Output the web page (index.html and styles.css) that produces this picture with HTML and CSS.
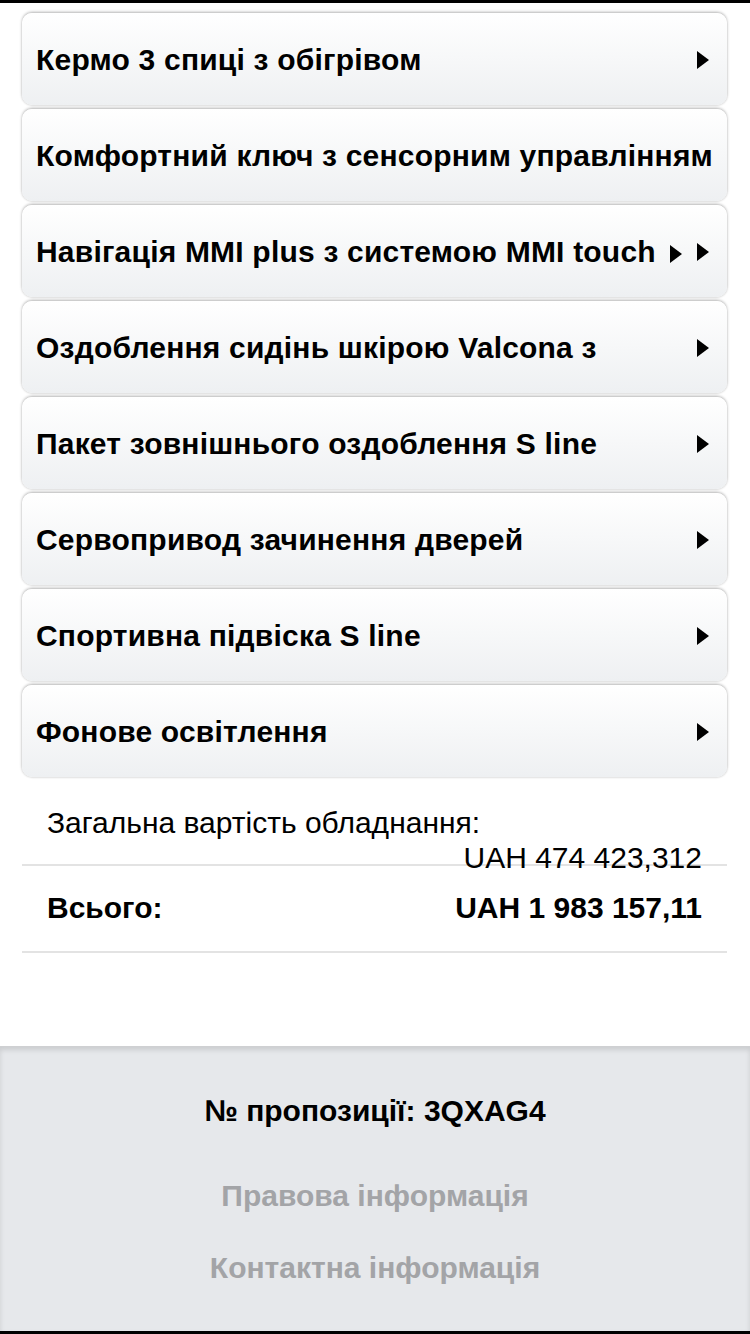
FILE: index.html
```html
<!DOCTYPE html>
<html lang="uk">
<head>
<meta charset="UTF-8" />
<meta name="viewport" content="width=device-width, initial-scale=1" />
<title>Обладнання</title>
<link rel="stylesheet" href="styles.css">
</head>
<body>

<div class="topbar"></div>

<div class="options">
  <div class="option"><span class="title">Кермо 3 спиці з обігрівом</span><span class="arrow"></span></div>
  <div class="option"><span class="title">Комфортний ключ з сенсорним управлінням</span></div>
  <div class="option"><span class="title">Навігація MMI plus з системою MMI touch <span class="arrow inline"></span></span><span class="arrow"></span></div>
  <div class="option"><span class="title">Оздоблення сидінь шкірою Valcona з</span><span class="arrow"></span></div>
  <div class="option"><span class="title">Пакет зовнішнього оздоблення S line</span><span class="arrow"></span></div>
  <div class="option"><span class="title">Сервопривод зачинення дверей</span><span class="arrow"></span></div>
  <div class="option"><span class="title">Спортивна підвіска S line</span><span class="arrow"></span></div>
  <div class="option"><span class="title">Фонове освітлення</span><span class="arrow"></span></div>
</div>

<div class="summary">
  <div class="sum-label">Загальна вартість обладнання:</div>
  <div class="sum-value">UAH 474 423,312</div>
  <div class="total">
    <span>Всього:</span>
    <span>UAH 1 983 157,11</span>
  </div>
</div>

<footer>
  <div class="offer">№ пропозиції: 3QXAG4</div>
  <a href="#" class="legal">Правова інформація</a>
  <a href="#" class="contact">Контактна інформація</a>
</footer>

<div class="bottombar"></div>

</body>
</html>
```

FILE: styles.css
```css
body {
  margin: 0;
  padding: 0;
  background: #fff;
  color: #000;
  font-family: "Liberation Sans", Arial, sans-serif;
  font-size: 30px;
}
.topbar {
  height: 3px;
  background: #000;
}
.options {
  padding: 10px 23px 0 22px;
  display: flex;
  flex-direction: column;
  gap: 4px;
}
.option {
  height: 92px;
  border-radius: 10px;
  background: linear-gradient(#ffffff, #eef0f2);
  box-shadow: 0 -1px 3px rgba(0,0,0,0.3), 0 1px 2px rgba(0,0,0,0.08);
  display: flex;
  align-items: center;
  padding: 2px 18px 0 14px;
  box-sizing: border-box;
  overflow: hidden;
  white-space: nowrap;
}
.option .title {
  flex: 1;
  min-width: 0;
  font-weight: bold;
  line-height: 34px;
  letter-spacing: 0.2px;
}
.arrow {
  flex: none;
  width: 0;
  height: 0;
  border-top: 9px solid transparent;
  border-bottom: 9px solid transparent;
  border-left: 12px solid #000;
}
.arrow.inline {
  display: inline-block;
  vertical-align: -1px;
  margin-left: 6px;
}

/* Sumas */
.summary {
  margin: 29px 23px 0 22px;
}
.sum-label {
  padding: 0 25px;
  line-height: 34px;
  height: 35px;
}
.sum-value {
  padding: 0 25px;
  line-height: 34px;
  height: 23px;
  text-align: right;
  border-bottom: 2px solid #e3e3e3;
}
.total {
  display: flex;
  justify-content: space-between;
  padding: 25px 25px 26px;
  line-height: 34px;
  font-weight: bold;
  border-bottom: 2px solid #e3e3e3;
}

footer {
  margin-top: 93px;
  height: 285px;
  box-sizing: border-box;
  background: #e6e8eb;
  box-shadow: inset 0 3px 5px rgba(0,0,0,0.12);
  border-top: 1px solid #cfd0d2;
  padding-top: 47px;
  display: flex;
  flex-direction: column;
  align-items: center;
  line-height: 34px;
  font-weight: bold;
}
.offer {
  color: #000;
}
footer a {
  color: #a3a4a7;
  text-decoration: none;
}
.legal {
  margin-top: 51px;
}
.contact {
  margin-top: 38px;
}
.bottombar {
  height: 3px;
  background: #000;
}
```
